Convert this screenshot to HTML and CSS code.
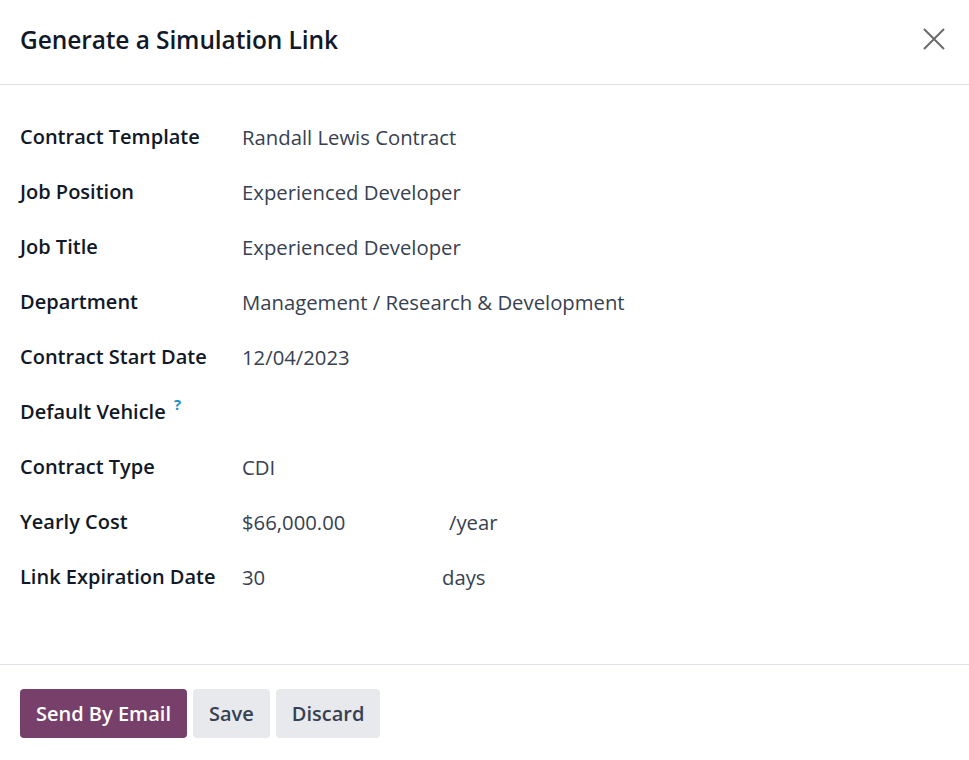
FILE: index.html
```html
<!DOCTYPE html>
<html>
<head>
<meta charset="utf-8">
<link rel="stylesheet" href="styles.css">
</head>
<body>
<div class="dialog">
  <header class="head">
    <h1 class="title">Generate a Simulation Link</h1>
    <button class="close" aria-label="Close">
      <svg width="24" height="24" viewBox="0 0 24 24"><path d="M2 2 L22 22 M22 2 L2 22" stroke="#6b6b6b" stroke-width="2" fill="none"/></svg>
    </button>
  </header>
  <main class="body">
    <div class="row"><div class="label">Contract Template</div><div class="value">Randall Lewis Contract</div></div>
    <div class="row"><div class="label">Job Position</div><div class="value">Experienced Developer</div></div>
    <div class="row"><div class="label">Job Title</div><div class="value">Experienced Developer</div></div>
    <div class="row"><div class="label">Department</div><div class="value">Management / Research &amp; Development</div></div>
    <div class="row"><div class="label">Contract Start Date</div><div class="value">12/04/2023</div></div>
    <div class="row"><div class="label">Default Vehicle <sup class="help">?</sup></div><div class="value"></div></div>
    <div class="row"><div class="label">Contract Type</div><div class="value">CDI</div></div>
    <div class="row"><div class="label">Yearly Cost</div><div class="value"><span class="amount">$66,000.00</span><span class="unit">/year</span></div></div>
    <div class="row"><div class="label">Link Expiration Date</div><div class="value"><span class="days-num">30</span><span class="unit">days</span></div></div>
  </main>
  <footer class="foot">
    <button class="btn primary">Send By Email</button>
    <button class="btn secondary">Save</button>
    <button class="btn secondary">Discard</button>
  </footer>
</div>
</body>
</html>
```
FILE: styles.css
```css
html, body {
  margin: 0;
  padding: 0;
  background: #fff;
}
body {
  font-family: "Open Sans", "Noto Sans", sans-serif;
  color: #374151;
}
.dialog {
  width: 969px;
  height: 760px;
  display: flex;
  flex-direction: column;
  overflow: hidden;
}
.head {
  flex: 0 0 85px;
  box-sizing: border-box;
  border-bottom: 1px solid #dee2e6;
  display: flex;
  align-items: center;
  justify-content: space-between;
  padding: 0 23px 6px 20px;
}
.title {
  margin: 0;
  font-size: 24.5px;
  font-weight: 600;
  color: #111827;
  letter-spacing: -0.1px;
}
.close {
  border: 0;
  background: none;
  padding: 0;
  width: 24px;
  height: 24px;
  cursor: pointer;
}
.body {
  flex: 1 1 auto;
  padding: 38px 20px 0 20px;
  box-sizing: border-box;
}
.row {
  display: flex;
  align-items: baseline;
  height: 55px;
}
.label {
  width: 222px;
  flex: 0 0 222px;
  font-size: 20px;
  line-height: 27px;
  font-weight: 600;
  color: #111827;
}
.value {
  font-size: 20.3px;
  line-height: 27px;
  color: #374151;
  position: relative;
  top: 1px;
  display: flex;
}
.help {
  color: #1a8fc4;
  font-size: 15px;
  font-weight: 700;
  vertical-align: 9px;
  line-height: 0;
  margin-left: 3px;
}
.amount { width: 207px; }
.days-num { width: 200px; }
.foot {
  flex: 0 0 96px;
  box-sizing: border-box;
  border-top: 1px solid #dee2e6;
  display: flex;
  align-items: flex-start;
  gap: 6px;
  padding: 24px 20px 0 20px;
}
.btn {
  height: 49px;
  border: 0;
  border-radius: 4px;
  font-family: inherit;
  font-size: 20px;
  font-weight: 600;
  padding: 0 16px;
  cursor: pointer;
}
.primary {
  background: #77406a;
  color: #fff;
}
.secondary {
  background: #e7e9ed;
  color: #374151;
}
```
